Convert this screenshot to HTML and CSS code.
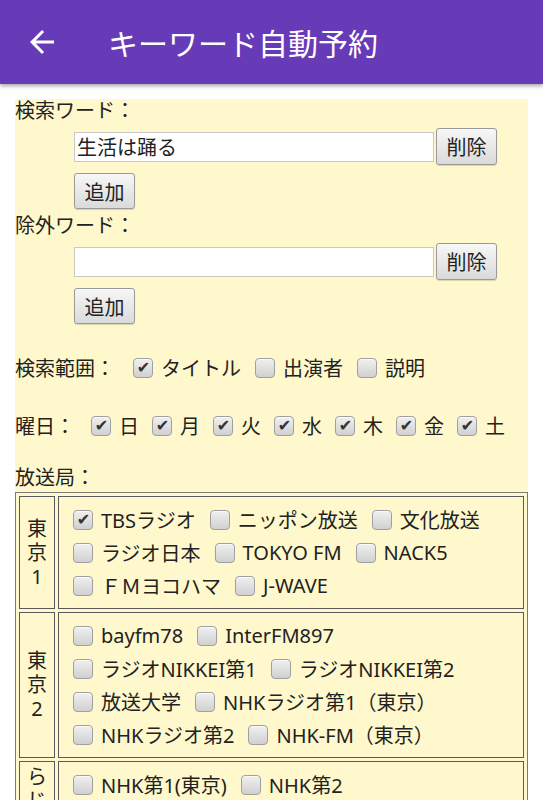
FILE: index.html
```html
<!DOCTYPE html>
<html lang="ja">
<head>
<meta charset="utf-8">
<title>キーワード自動予約</title>
<link rel="stylesheet" href="styles.css">
</head>
<body>
<header class="appbar">
  <svg class="back" viewBox="0 0 24 24" width="36" height="36"><path fill="#fff" d="M20 11H7.83l5.59-5.59L12 4l-8 8 8 8 1.41-1.41L7.83 13H20v-2z"/></svg>
  <h1 class="title">キーワード自動予約</h1>
</header>
<main class="content">
  <div class="label">検索ワード：</div>
  <div class="word-row">
    <input class="text" type="text" value="生活は踊る">
    <button class="btn">削除</button>
  </div>
  <div class="add-row"><button class="btn">追加</button></div>

  <div class="label">除外ワード：</div>
  <div class="word-row">
    <input class="text" type="text" value="">
    <button class="btn">削除</button>
  </div>
  <div class="add-row"><button class="btn">追加</button></div>

  <div class="check-row range">
    <span class="row-title">検索範囲：</span>
    <label class="item"><input type="checkbox" checked>タイトル</label>
    <label class="item"><input type="checkbox">出演者</label>
    <label class="item"><input type="checkbox">説明</label>
  </div>

  <div class="check-row days">
    <span class="row-title">曜日：</span>
    <label class="item"><input type="checkbox" checked>日</label>
    <label class="item"><input type="checkbox" checked>月</label>
    <label class="item"><input type="checkbox" checked>火</label>
    <label class="item"><input type="checkbox" checked>水</label>
    <label class="item"><input type="checkbox" checked>木</label>
    <label class="item"><input type="checkbox" checked>金</label>
    <label class="item"><input type="checkbox" checked>土</label>
  </div>

  <div class="label station-label">放送局：</div>
  <table class="stations">
    <tr>
      <td class="area">東<br>京<br>1</td>
      <td class="list">
        <div class="line">
          <label class="item"><input type="checkbox" checked>TBSラジオ</label>
          <label class="item"><input type="checkbox">ニッポン放送</label>
          <label class="item"><input type="checkbox">文化放送</label>
        </div>
        <div class="line">
          <label class="item"><input type="checkbox">ラジオ日本</label>
          <label class="item"><input type="checkbox">TOKYO FM</label>
          <label class="item"><input type="checkbox">NACK5</label>
        </div>
        <div class="line">
          <label class="item"><input type="checkbox">ＦＭヨコハマ</label>
          <label class="item"><input type="checkbox">J-WAVE</label>
        </div>
      </td>
    </tr>
    <tr>
      <td class="area">東<br>京<br>2</td>
      <td class="list">
        <div class="line">
          <label class="item"><input type="checkbox">bayfm78</label>
          <label class="item"><input type="checkbox">InterFM897</label>
        </div>
        <div class="line">
          <label class="item"><input type="checkbox">ラジオNIKKEI第1</label>
          <label class="item"><input type="checkbox">ラジオNIKKEI第2</label>
        </div>
        <div class="line">
          <label class="item"><input type="checkbox">放送大学</label>
          <label class="item"><input type="checkbox">NHKラジオ第1（東京）</label>
        </div>
        <div class="line">
          <label class="item"><input type="checkbox">NHKラジオ第2</label>
          <label class="item"><input type="checkbox">NHK-FM（東京）</label>
        </div>
      </td>
    </tr>
    <tr>
      <td class="area">ら<br>じ<br>る</td>
      <td class="list">
        <div class="line">
          <label class="item"><input type="checkbox">NHK第1(東京)</label>
          <label class="item"><input type="checkbox">NHK第2</label>
        </div>
        <div class="line">
          <label class="item"><input type="checkbox">NHK-FM(東京)</label>
        </div>
      </td>
    </tr>
  </table>
</main>
</body>
</html>
```
FILE: styles.css
```css
html, body {
  margin: 0;
  padding: 0;
  background: #fff;
}
body {
  font-family: "Noto Sans", "Noto Sans CJK JP", sans-serif;
  font-size: 20px;
  color: #222;
  overflow: hidden;
}
.appbar {
  height: 84px;
  background: #673ab7;
  display: flex;
  align-items: center;
  box-shadow: 0 2px 4px rgba(0, 0, 0, 0.35);
  position: relative;
  z-index: 1;
}
.back {
  margin-left: 24px;
  flex: none;
}
.title {
  margin: 0 0 0 48px;
  font-family: "Noto Sans CJK JP", sans-serif;
  font-size: 30px;
  font-weight: 400;
  color: #fff;
  line-height: 1;
}
.content {
  margin: 15px 15px 0;
  background: #fff8cc;
  min-height: 800px;
}
.label {
  line-height: 24px;
  height: 24px;
}
.word-row {
  display: flex;
  align-items: center;
  margin-top: 5px;
  padding-left: 59px;
}
.text {
  box-sizing: border-box;
  width: 360px;
  height: 30px;
  border: 1px solid #c8c8c8;
  background: #fff;
  font: inherit;
  font-size: 20px;
  color: #222;
  padding: 0 2px;
  margin: 0;
  outline: none;
}
.btn {
  box-sizing: border-box;
  height: 37px;
  width: 61px;
  margin: 0 0 0 2px;
  padding: 0;
  font: inherit;
  font-size: 20px;
  color: #222;
  border: 1px solid #9a9a9a;
  border-radius: 3px;
  background: linear-gradient(#f7f7f7, #dadada);
  box-shadow: 0 1px 1px rgba(0, 0, 0, 0.15);
}
.add-row {
  margin-top: 8px;
  padding-left: 59px;
}
.add-row .btn {
  margin: 0;
  height: 36px;
  display: block;
}
.add-row + .label {
  margin-top: 5px;
}
.check-row {
  display: flex;
  align-items: center;
  height: 33px;
}
.range {
  margin-top: 27px;
}
.days {
  margin-top: 25px;
}
.range .row-title {
  margin-right: 4px;
}
.days .row-title {
  margin-right: 2px;
}
.station-label {
  margin-top: 24px;
}
.item {
  display: inline-flex;
  align-items: center;
  margin-right: 14px;
  white-space: nowrap;
}
.check-row .item {
  margin-left: 14px;
  margin-right: 0;
}
.days .item {
  margin-left: 13px;
}
.days .item:first-of-type {
  margin-left: 14px;
}
.item input {
  appearance: none;
  -webkit-appearance: none;
  box-sizing: border-box;
  width: 20px;
  height: 20px;
  margin: 0 8px 0 0;
  border: 1px solid #a0a0a0;
  border-radius: 4px;
  background: linear-gradient(#f0f0f0, #d0d0d0);
  box-shadow: inset 0 1px 0 rgba(255, 255, 255, 0.7);
  position: relative;
  flex: none;
}
.item input:checked::after {
  content: "\2714";
  position: absolute;
  left: 1px;
  top: 0;
  width: 17px;
  height: 18px;
  font-family: "DejaVu Sans", sans-serif;
  font-size: 16px;
  line-height: 18px;
  text-align: center;
  color: #333;
}
.stations {
  margin-top: 2px;
  width: 513px;
  border-collapse: separate;
  border-spacing: 3px;
  border: 1px solid #7a7a7a;
  box-sizing: border-box;
}
.stations td {
  border: 1px solid #5a5a5a;
  padding: 0;
}
.area {
  width: 34px;
  text-align: center;
  line-height: 24px;
  vertical-align: middle;
}
.list {
  padding: 6px 14px 6px !important;
  vertical-align: top;
}
.line {
  height: 33px;
  display: flex;
  align-items: center;
}
```
